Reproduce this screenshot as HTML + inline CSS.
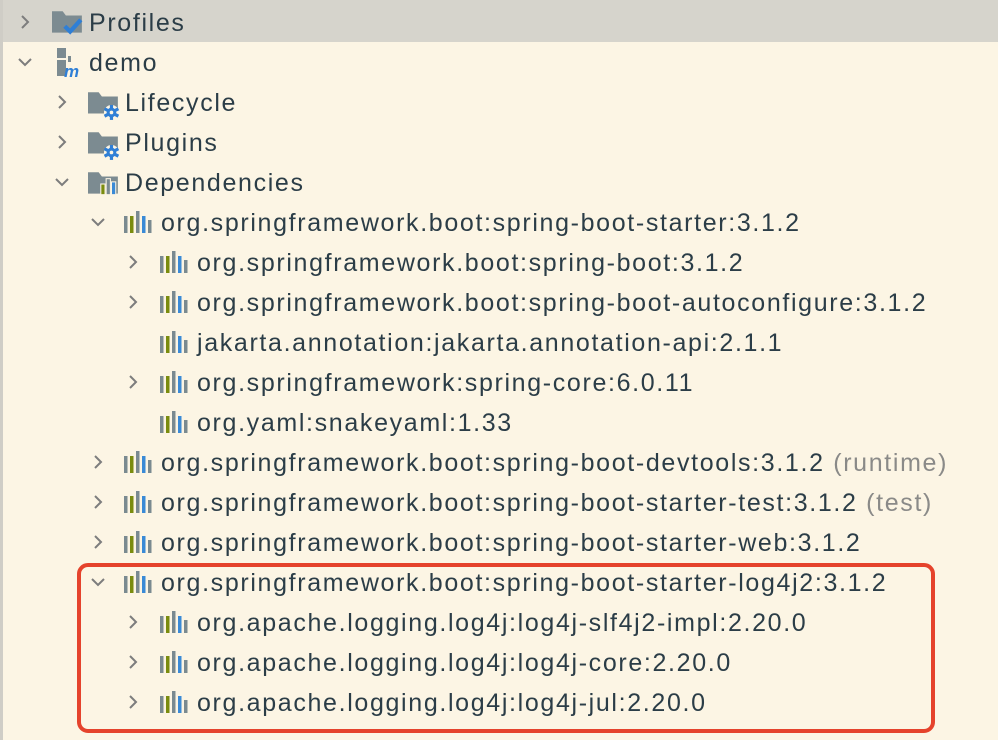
<!DOCTYPE html>
<html><head><style>
body{margin:0;width:998px;height:740px;background:#fcf5e4;overflow:hidden;position:relative;font-family:"Liberation Sans",sans-serif;}
.row{position:absolute;left:0;width:998px;height:40px;}
.t{position:absolute;top:6px;font-size:25px;letter-spacing:1.65px;color:#2b3d47;white-space:nowrap;line-height:30px;}
.g{color:#8a8a88}
.ch{position:absolute;top:13px;width:14px;height:14px;}
.ic{position:absolute;top:9px;}
#sel{position:absolute;left:0;top:0;width:998px;height:42px;background:#d6d4cc;}
#edge{position:absolute;left:0;top:0;width:3px;height:740px;background:#cfcdc6;}
#box{position:absolute;left:77px;top:563px;width:850px;height:162px;border:4px solid #e5432c;border-radius:11px;}
</style></head><body>
<div id="sel"></div><div id="edge"></div>
<svg width="0" height="0" style="position:absolute">
<defs>
<symbol id="cr" viewBox="0 0 14 14"><path d="M4 1 L10 7 L4 13" fill="none" stroke="#7d7d7d" stroke-width="2"/></symbol>
<symbol id="cd" viewBox="0 0 14 14"><path d="M1 4 L7 10 L13 4" fill="none" stroke="#7d7d7d" stroke-width="2"/></symbol>
<symbol id="dep" viewBox="0 0 28 22"><rect x="0" y="5" width="3.5" height="17" fill="#7a8a90"/><rect x="6" y="5" width="3.5" height="17" fill="#7a8c0f"/><rect x="12" y="0" width="3.5" height="22" fill="#7a8a90"/><rect x="18" y="5" width="3.5" height="17" fill="#3a8ad6"/><rect x="24" y="9" width="3.5" height="13" fill="#7a8a90"/></symbol>
<symbol id="gear" viewBox="0 0 30 28"><path d="M0 2 H10 L13 6 H28 V22 H0Z" fill="#7c8b91"/><circle cx="22" cy="21" r="7" fill="#fcf5e4"/><g stroke="#2f7fd6" stroke-width="3"><line x1="22" y1="14" x2="22" y2="28"/><line x1="15.5" y1="17.5" x2="28.5" y2="24.5"/><line x1="15.5" y1="24.5" x2="28.5" y2="17.5"/></g><circle cx="22" cy="21" r="4.5" fill="#2f7fd6"/><circle cx="22" cy="21" r="1.7" fill="#fcf5e4"/></symbol>
</defs></svg>

<div class="row" style="top:2px"><svg class="ch" style="left:18px"><use href="#cr"/></svg>
<svg class="ic" style="left:52px;top:7px" width="32" height="28" viewBox="0 0 30 26"><path d="M0 2 H10 L13 6 H28 V22 H0Z" fill="#7c8b91"/><path d="M12 16 L17 21 L27 10" fill="none" stroke="#2f7fd6" stroke-width="4"/></svg>
<div class="t" style="left:89px">Profiles</div></div>

<div class="row" style="top:42px"><svg class="ch" style="left:18px"><use href="#cd"/></svg>
<svg class="ic" style="left:55px;top:6px" width="28" height="30" viewBox="0 0 28 30"><rect x="2" y="0" width="9" height="10" fill="#7c8b91"/><rect x="2" y="12" width="9" height="16" fill="#7c8b91"/><rect x="13" y="8" width="3" height="6" fill="#7c8b91"/><text x="9" y="29" font-size="17" font-style="italic" font-weight="bold" fill="#2f7fd6" font-family="Liberation Sans">m</text></svg>
<div class="t" style="left:89px">demo</div></div>

<div class="row" style="top:82px"><svg class="ch" style="left:55px"><use href="#cr"/></svg>
<svg class="ic" style="left:88px;top:8px" width="32" height="30"><use href="#gear"/></svg>
<div class="t" style="left:125px">Lifecycle</div></div>

<div class="row" style="top:122px"><svg class="ch" style="left:55px"><use href="#cr"/></svg>
<svg class="ic" style="left:88px;top:8px" width="32" height="30"><use href="#gear"/></svg>
<div class="t" style="left:125px">Plugins</div></div>

<div class="row" style="top:162px"><svg class="ch" style="left:55px"><use href="#cd"/></svg>
<svg class="ic" style="left:88px;top:8px" width="32" height="28" viewBox="0 0 30 26"><path d="M0 2 H10 L13 6 H28 V22 H0Z" fill="#7c8b91"/><rect x="12" y="13" width="4" height="10" fill="#7a8c0f" stroke="#fcf5e4" stroke-width="1"/><rect x="17" y="8" width="4" height="15" fill="#7a8a90" stroke="#fcf5e4" stroke-width="1"/><rect x="22" y="11" width="4" height="12" fill="#3a8ad6" stroke="#fcf5e4" stroke-width="1"/></svg>
<div class="t" style="left:125px">Dependencies</div></div>

<div class="row" style="top:202px"><svg class="ch" style="left:91px"><use href="#cd"/></svg><svg class="ic" style="left:124px" width="28" height="22"><use href="#dep"/></svg><div class="t" style="left:161px">org.springframework.boot:spring-boot-starter:3.1.2</div></div>
<div class="row" style="top:242px"><svg class="ch" style="left:126px"><use href="#cr"/></svg><svg class="ic" style="left:160px" width="28" height="22"><use href="#dep"/></svg><div class="t" style="left:197px">org.springframework.boot:spring-boot:3.1.2</div></div>
<div class="row" style="top:282px"><svg class="ch" style="left:126px"><use href="#cr"/></svg><svg class="ic" style="left:160px" width="28" height="22"><use href="#dep"/></svg><div class="t" style="left:197px">org.springframework.boot:spring-boot-autoconfigure:3.1.2</div></div>
<div class="row" style="top:322px"><svg class="ic" style="left:160px" width="28" height="22"><use href="#dep"/></svg><div class="t" style="left:197px">jakarta.annotation:jakarta.annotation-api:2.1.1</div></div>
<div class="row" style="top:362px"><svg class="ch" style="left:126px"><use href="#cr"/></svg><svg class="ic" style="left:160px" width="28" height="22"><use href="#dep"/></svg><div class="t" style="left:197px">org.springframework:spring-core:6.0.11</div></div>
<div class="row" style="top:402px"><svg class="ic" style="left:160px" width="28" height="22"><use href="#dep"/></svg><div class="t" style="left:197px">org.yaml:snakeyaml:1.33</div></div>
<div class="row" style="top:442px"><svg class="ch" style="left:91px"><use href="#cr"/></svg><svg class="ic" style="left:124px" width="28" height="22"><use href="#dep"/></svg><div class="t" style="left:161px">org.springframework.boot:spring-boot-devtools:3.1.2 <span class="g">(runtime)</span></div></div>
<div class="row" style="top:482px"><svg class="ch" style="left:91px"><use href="#cr"/></svg><svg class="ic" style="left:124px" width="28" height="22"><use href="#dep"/></svg><div class="t" style="left:161px">org.springframework.boot:spring-boot-starter-test:3.1.2 <span class="g">(test)</span></div></div>
<div class="row" style="top:522px"><svg class="ch" style="left:91px"><use href="#cr"/></svg><svg class="ic" style="left:124px" width="28" height="22"><use href="#dep"/></svg><div class="t" style="left:161px">org.springframework.boot:spring-boot-starter-web:3.1.2</div></div>
<div class="row" style="top:562px"><svg class="ch" style="left:91px"><use href="#cd"/></svg><svg class="ic" style="left:124px" width="28" height="22"><use href="#dep"/></svg><div class="t" style="left:161px">org.springframework.boot:spring-boot-starter-log4j2:3.1.2</div></div>
<div class="row" style="top:602px"><svg class="ch" style="left:126px"><use href="#cr"/></svg><svg class="ic" style="left:160px" width="28" height="22"><use href="#dep"/></svg><div class="t" style="left:197px">org.apache.logging.log4j:log4j-slf4j2-impl:2.20.0</div></div>
<div class="row" style="top:642px"><svg class="ch" style="left:126px"><use href="#cr"/></svg><svg class="ic" style="left:160px" width="28" height="22"><use href="#dep"/></svg><div class="t" style="left:197px">org.apache.logging.log4j:log4j-core:2.20.0</div></div>
<div class="row" style="top:682px"><svg class="ch" style="left:126px"><use href="#cr"/></svg><svg class="ic" style="left:160px" width="28" height="22"><use href="#dep"/></svg><div class="t" style="left:197px">org.apache.logging.log4j:log4j-jul:2.20.0</div></div>
<div id="box"></div>
</body></html>
